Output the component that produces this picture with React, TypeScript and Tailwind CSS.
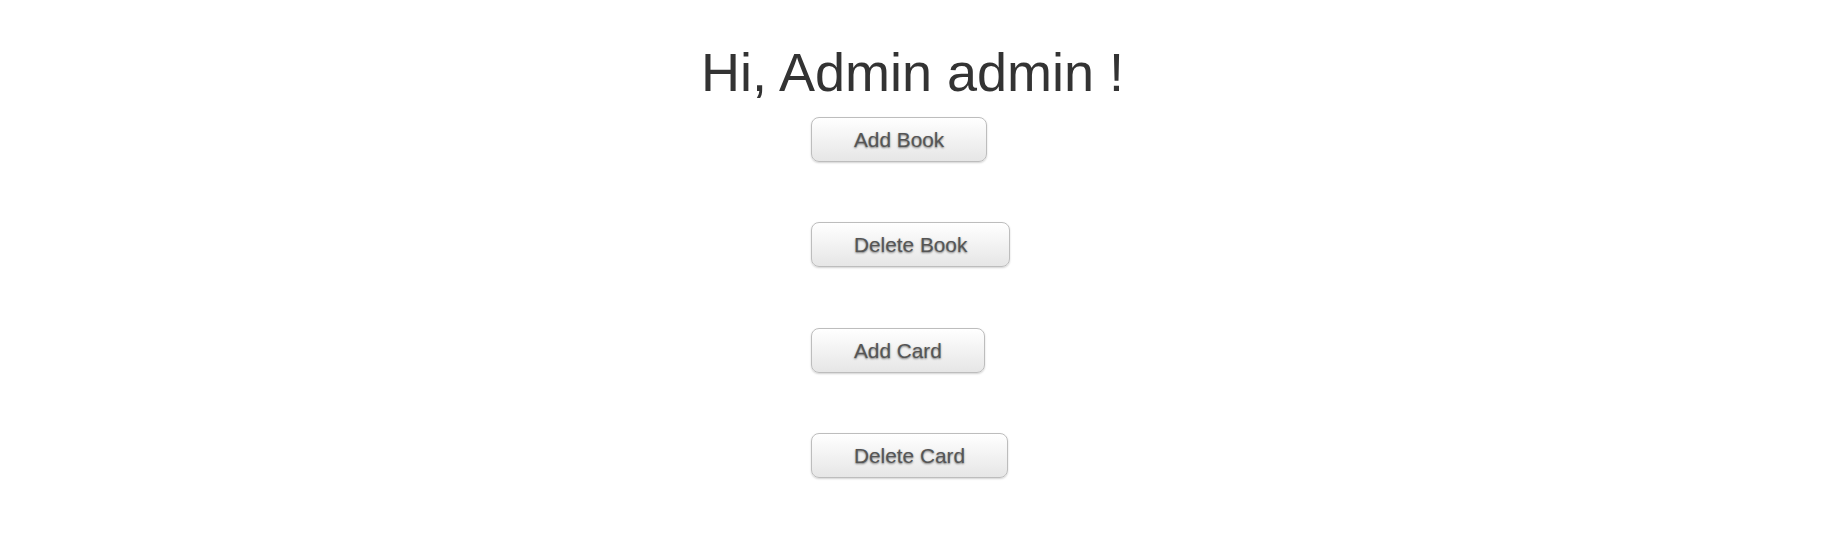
import React from "react";

const labels = ["Add Book", "Delete Book", "Add Card", "Delete Card"];

export default function App() {
  return (
    <div className="min-h-[551px] w-full bg-white font-['Liberation_Sans',Arial,sans-serif] text-[#333]">
      <div className="flex flex-col items-center pt-[42px]">
        <h1 className="pr-[6px] text-center text-[54px] font-normal leading-[60px] text-[#333]">
          Hi, Admin admin !
        </h1>
        <div className="mt-[15px] flex w-[209px] flex-col items-start gap-[60.3px]">
          {labels.map((l) => (
            <button
              key={l}
              type="button"
              className="rounded-[8px] border border-[#bdbdbd] bg-gradient-to-b from-white to-[#e6e6e6] px-[42px] py-[10px] text-[20.8px] leading-[23px] text-[#555] shadow-[0_1px_2px_rgba(0,0,0,0.18)] [text-shadow:0_1px_2px_rgba(0,0,0,0.5)]"
            >
              {l}
            </button>
          ))}
        </div>
      </div>
    </div>
  );
}
